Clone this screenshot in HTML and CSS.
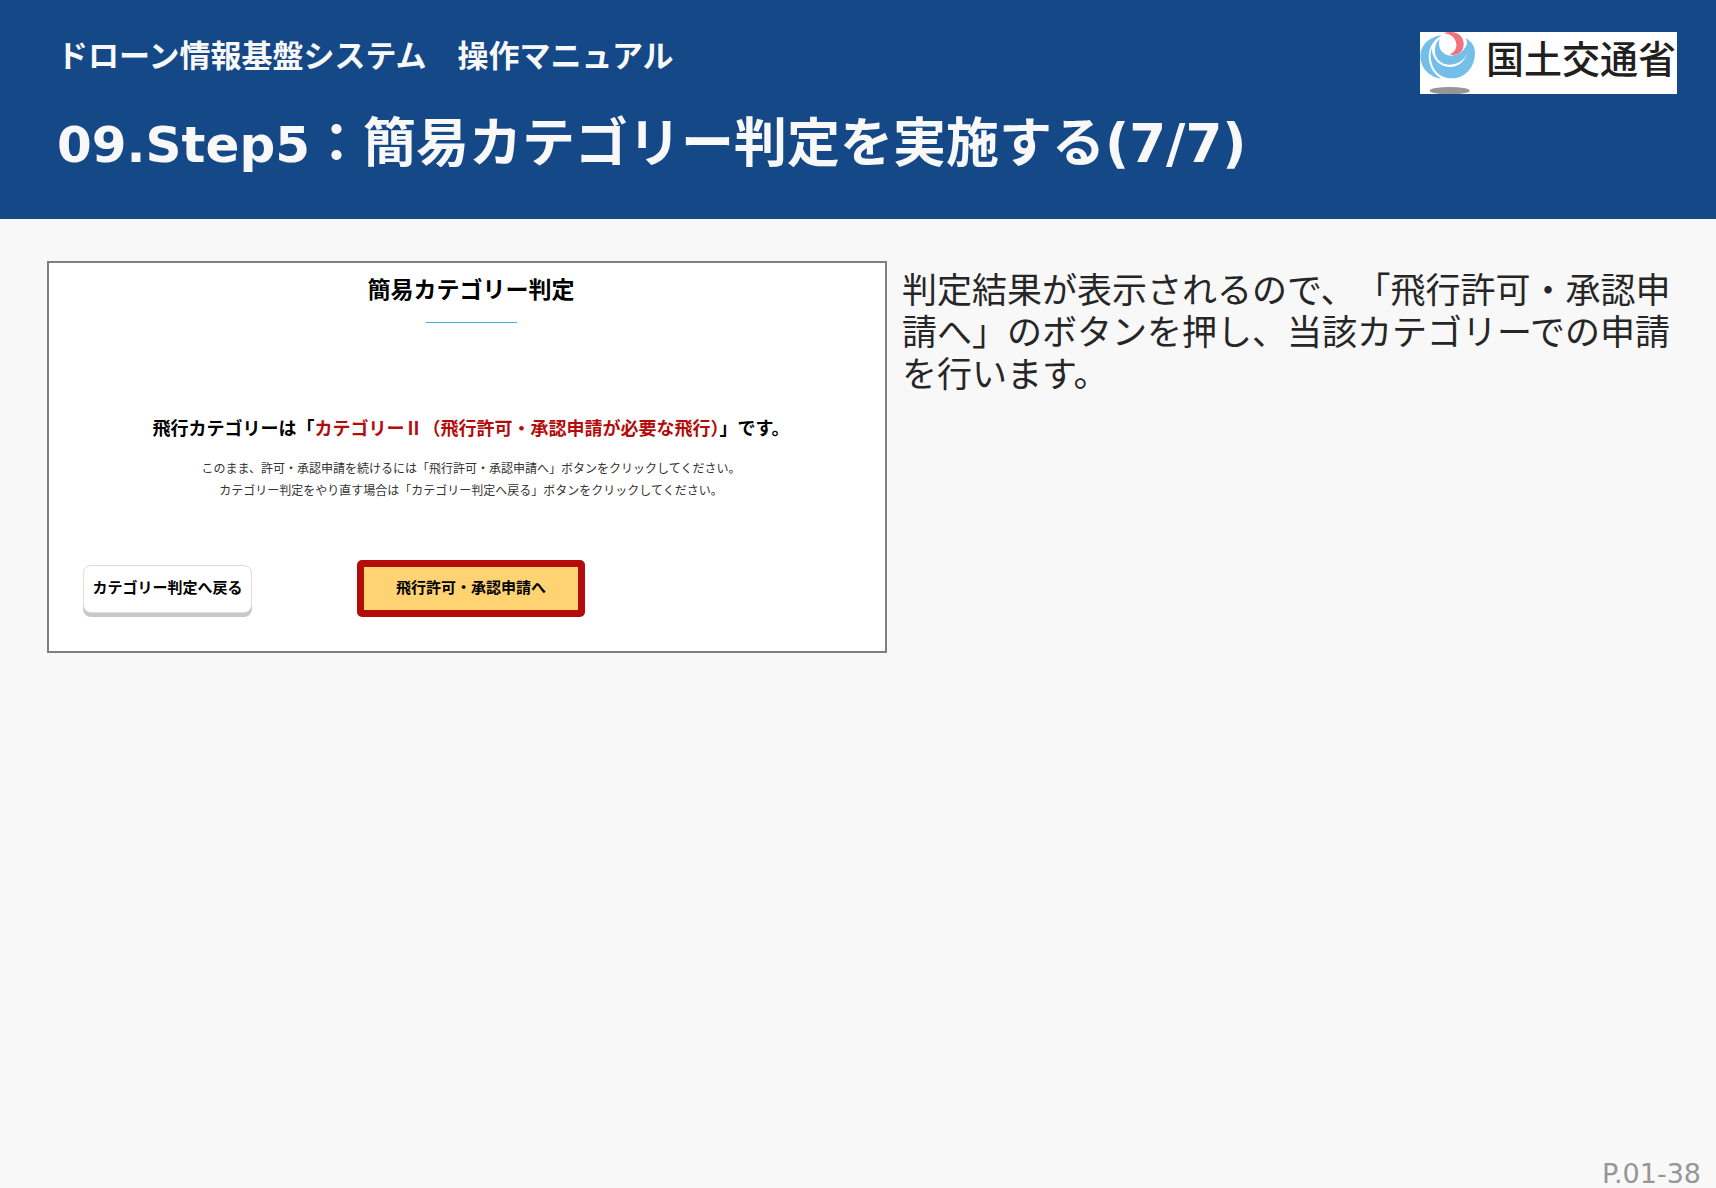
FILE: index.html
```html
<!DOCTYPE html>
<html lang="ja">
<head>
  <meta charset="UTF-8" />
  <meta name="viewport" content="width=device-width, initial-scale=1.0"/>
  <title>ドローン情報基盤システム　操作マニュアル</title>
  <link rel="stylesheet" href="styles.css">
</head>
<body>
  <header class="header">
    <div>
      <p class="manual-name">ドローン情報基盤システム　操作マニュアル</p>
      <h1><span class="step">09.Step5</span>：簡易カテゴリー判定を実施する(7/7)</h1>
    </div>
    <div class="logo">
      <svg class="logo-mark" viewBox="60 36 168 186" aria-hidden="true">
        <ellipse cx="149" cy="212" rx="60" ry="11" fill="#969696"/>
        <path fill="#74bfea" d="M126 46C85 50 61 78 61 108c0 37 29 64 63 68-26-16-38-41-38-68 1-28 17-50 40-62z"/>
        <path fill="#74bfea" d="M94 84c-8 38 6 91 61 91 42 0 70-35 70-77 0-19-12-35-28-44 17 36-2 87-47 87-32 0-52-25-56-57z"/>
        <path fill="#74bfea" d="M119 56c-26 26-17 77 31 78 40 0 63-37 53-70-6 27-26 43-50 43-26-1-42-24-34-51z"/>
        <path fill="#f2717b" d="M130 40c17-8 42-5 54 10 12 17 8 42-7 50-8 5-20 6-28 3 13-5 21-16 20-30-1-18-18-34-39-33z"/>
      </svg>
      <span class="logo-text">国土交通省</span>
    </div>
  </header>

  <main class="content">
    <section class="screen">
      <h2>簡易カテゴリー判定</h2>
      <p class="result">飛行カテゴリーは「<span>カテゴリーⅡ（飛行許可・承認申請が必要な飛行）</span>」です。</p>
      <p class="guide">このまま、許可・承認申請を続けるには「飛行許可・承認申請へ」ボタンをクリックしてください。<br>カテゴリー判定をやり直す場合は「カテゴリー判定へ戻る」ボタンをクリックしてください。</p>
      <div class="buttons">
        <button type="button" class="back">カテゴリー判定へ戻る</button>
        <button type="button" class="apply">飛行許可・承認申請へ</button>
      </div>
    </section>
    <p class="description">判定結果が表示されるので、「飛行許可・承認申請へ」のボタンを押し、当該カテゴリーでの申請を行います。</p>
  </main>

  <footer>P.01-38</footer>
</body>
</html>
```
FILE: styles.css
```css
* {
  box-sizing: border-box;
}

body {
  margin: 0;
  min-height: 100vh;
  display: flex;
  flex-direction: column;
  font-family: 'DejaVu Sans', 'Noto Sans CJK JP', sans-serif;
  background: #f8f8f8;
  color: #262626;
}

h1, h2, p {
  margin: 0;
}

.header {
  display: flex;
  justify-content: space-between;
  align-items: flex-start;
  padding: 32px 39px 34px 57px;
  background: #144887;
  color: #f8f8f8;
}

.manual-name {
  font-size: 31px;
  font-weight: bold;
  line-height: 48px;
}

h1 {
  margin-top: 24px;
  font-size: 53px;
  line-height: 80px;
}

.step {
  font-size: 50px;
}

/* logo */
.logo {
  display: flex;
  width: 257px;
  height: 62px;
  background: #fff;
}

.logo-mark {
  flex: none;
  width: 56px;
  height: 62px;
}

.logo-text {
  flex: none;
  margin-left: 10px;
  font-family: 'Noto Sans CJK JP', sans-serif;
  font-size: 38px;
  font-weight: 500;
  line-height: 50px;
  color: #231f20;
}

.content {
  flex: 1;
  display: grid;
  grid-template-columns: 840px 1fr;
  gap: 15px;
  align-items: start;
  padding: 42px 38px 0 47px;
}

/* captured screen */
.screen {
  padding: 7px 0 34px 8px;
  border: 2px solid #7f7f7f;
  background: #fff;
  font-family: 'Noto Sans CJK JP', sans-serif;
  color: #000;
  text-align: center;
}

h2 {
  font-size: 23px;
  line-height: 36px;
}

h2::after {
  content: "";
  display: block;
  width: 91px;
  height: 1px;
  margin: 16px auto 0;
  background: #4aa8e0;
}

.result {
  margin-top: 86px;
  font-size: 18px;
  font-weight: bold;
  line-height: 36px;
}

.result span {
  color: #b40b0b;
}

.guide {
  margin-top: 12px;
  font-size: 12px;
  line-height: 22px;
  color: #333;
}

.buttons {
  display: grid;
  grid-template-columns: 1fr auto 1fr;
  align-items: center;
  margin-top: 59px;
}

button {
  padding: 0 0 4px;
  font-family: 'Noto Sans CJK JP', sans-serif;
  font-size: 15px;
  font-weight: bold;
  color: #000;
}

.back {
  width: 169px;
  height: 48px;
  margin-left: 26px;
  border: 1px solid #ddd;
  border-radius: 8px;
  background: #fff;
  box-shadow: 0 4px #c8c8c8;
}

.apply {
  width: 228px;
  height: 57px;
  border: 7px solid #b40b0b;
  border-radius: 5px;
  background: #ffd272;
}

.description {
  padding-top: 9px;
  font-size: 35px;
  line-height: 42px;
  text-spacing-trim: space-all;
}

footer {
  padding: 0 15px 0 0;
  font-size: 27px;
  line-height: 28px;
  color: #969696;
  text-align: right;
}
```
